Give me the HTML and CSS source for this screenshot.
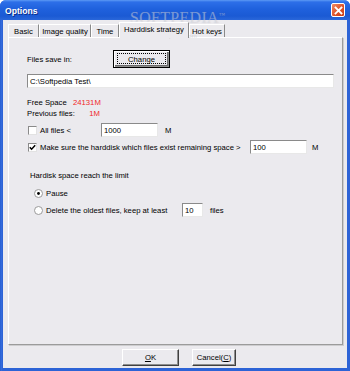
FILE: index.html
```html
<!DOCTYPE html>
<html>
<head>
<meta charset="utf-8">
<title>Options</title>
<link rel="stylesheet" href="styles.css">
</head>
<body>
<div class="window">
  <div class="titlebar">
    <span class="title">Options</span>
    <span class="close"><svg width="9" height="9" viewBox="0 0 9 9"><path d="M1.5 1.5 L7.5 7.5 M7.5 1.5 L1.5 7.5" stroke="#fff" stroke-width="1.8" stroke-linecap="square"/></svg></span>
  </div>
  <div class="client">
    <div class="tabs">
      <div class="tab t-basic">Basic</div>
      <div class="tab t-image">Image quality</div>
      <div class="tab t-time">Time</div>
      <div class="tab active t-hd">Harddisk strategy</div>
      <div class="tab t-hot">Hot keys</div>
    </div>
    <div class="panel">
      <div class="row row-save">
        <span class="lbl-save">Files save in:</span>
        <button class="btn btn-default">Change</button>
      </div>
      <div class="field f-path">C:\Softpedia Test\</div>
      <div class="row row-stat">
        <span class="lbl-stat">Free Space</span><span class="val">24131M</span>
      </div>
      <div class="row row-stat">
        <span class="lbl-stat">Previous files:</span><span class="val">1M</span>
      </div>
      <div class="row row-all">
        <span class="check"></span>
        <span class="lbl-all">All files &lt;</span>
        <div class="field f-num">1000</div>
        <span class="unit">M</span>
      </div>
      <div class="row row-sure">
        <span class="check"><svg width="7" height="7" viewBox="0 0 7 7"><path d="M0.8 3.2 L2.6 5.2 L6.2 1.2" fill="none" stroke="#000" stroke-width="1.5"/></svg></span>
        <span class="lbl-sure">Make sure the harddisk which files exist remaining space &gt;</span>
        <div class="field f-num">100</div>
        <span class="unit unit-sure">M</span>
      </div>
      <div class="row row-head">Hardisk space reach the limit</div>
      <div class="row row-pause">
        <span class="radio"><svg width="9" height="9" viewBox="0 0 9 9"><circle cx="4.5" cy="4.5" r="4" fill="#fff" stroke="#9a9a9a" stroke-width="1"/><circle cx="4.5" cy="4.5" r="1.4" fill="#000"/></svg></span>
        <span class="lbl-radio">Pause</span>
      </div>
      <div class="row row-delete">
        <span class="radio"><svg width="9" height="9" viewBox="0 0 9 9"><circle cx="4.5" cy="4.5" r="4" fill="#fff" stroke="#9a9a9a" stroke-width="1"/></svg></span>
        <span class="lbl-radio lbl-delete">Delete the oldest files, keep at least</span>
        <div class="field f-keep">10</div>
        <span class="unit">files</span>
      </div>
    </div>
    <div class="actions">
      <button class="btn btn-ok"><u>O</u>K</button>
      <button class="btn btn-cancel">Cancel(<u>C</u>)</button>
    </div>
  </div>
  <div class="watermark">SOFTPEDIA<sup>™</sup></div>
  <div class="watermark-url">www.softpedia.com</div>
</div>
</body>
</html>
```

FILE: styles.css
```css
* { box-sizing: border-box; }
html, body { margin: 0; padding: 0; }
body {
  width: 350px;
  height: 371px;
  overflow: hidden;
  background: #fff;
  font-family: "Liberation Sans", Arial, sans-serif;
  font-size: 7.7px;
  color: #000;
}

.window {
  position: relative;
  width: 350px;
  height: 371px;
  display: flex;
  flex-direction: column;
  background: linear-gradient(90deg, #1d52c9 0, #3a72e0 1px, #2d63d6 2px);
  border-radius: 6px 6px 0 0;
  overflow: hidden;
}

.titlebar {
  flex: none;
  height: 20px;
  display: flex;
  align-items: center;
  justify-content: space-between;
  padding: 0 5px 0 5px;
  background: linear-gradient(#5d9af5 0, #2d6fe8 2px, #1f61dd 45%, #1b5ad4 80%, #2a67da 100%);
}
.title {
  color: #fff;
  font-weight: bold;
  font-size: 8.6px;
  text-shadow: 1px 1px 0 #0b2f8a;
  margin-top: 1px;
}
.close {
  width: 14px;
  height: 14px;
  border: 1px solid #fff;
  border-radius: 2px;
  background: linear-gradient(135deg, #f08a64, #dc4f25 60%, #c83d16);
  display: flex;
  align-items: center;
  justify-content: center;
}

.client {
  flex: 1;
  margin: 0 3px 3px 3px;
  background: #ebeaee;
  display: flex;
  flex-direction: column;
  padding: 3px 4px 2px 5px;
}

.tabs {
  flex: none;
  height: 14px;
  display: flex;
  align-items: flex-end;
}
.tab {
  height: 13px;
  display: flex;
  align-items: center;
  justify-content: center;
  white-space: nowrap;
  border-top: 1px solid #fff;
  border-left: 1px solid #fff;
  border-right: 1px solid #8a8a8a;
  padding-top: 1px;
}
.t-basic { width: 31px; }
.t-image { width: 52px; }
.t-time { width: 28px; }
.t-hd { width: 70px; }
.t-hot { width: 36px; }
.tab.active {
  position: relative;
  z-index: 1;
  height: 16px;
  margin-bottom: -1px;
  background: #ebeaee;
  padding-bottom: 3px;
}

.panel {
  flex: none;
  height: 308px;
  border: 1px solid;
  border-color: #fff #9b9b9b #9b9b9b #fff;
  box-shadow: 1px 1px 0 #cdcdcf;
  padding: 0 0 0 18px;
}

.row {
  display: flex;
  align-items: center;
  white-space: nowrap;
}
.row-save { margin-top: 12px; height: 18px; }
.lbl-save { width: 86px; }

.btn {
  position: relative;
  font: inherit;
  color: #000;
  background: #ebeaee;
  padding: 0;
  display: flex;
  align-items: center;
  justify-content: center;
  border: 1px solid;
  border-color: #fff #404040 #404040 #fff;
  box-shadow: inset -1px -1px 0 #8f8f8f;
}
.btn-default {
  width: 57px;
  height: 18px;
  border-color: #000;
  box-shadow: inset 1px 1px 0 #fff, inset -1px -1px 0 #8f8f8f, inset -2px -2px 0 #6a6a6a;
}
.btn-default::after {
  content: "";
  position: absolute;
  left: 3px;
  top: 2px;
  right: 3px;
  bottom: 3px;
  border: 1px dotted #000;
}

.field {
  background: #fff;
  border: 1px solid;
  border-color: #8a8a8a #e8e8e8 #e8e8e8 #8a8a8a;
  height: 14px;
  padding-left: 2px;
  display: flex;
  align-items: center;
  white-space: nowrap;
}
.f-path { margin-top: 6px; width: 307px; }
.f-num { width: 57px; }
.f-keep { width: 21px; }

.row-stat { height: 10px; margin-top: 9px; }
.row-stat + .row-stat { margin-top: 1px; }
.lbl-stat { width: 46px; }
.val { width: 27px; text-align: right; color: #f02828; }

.check {
  width: 9px;
  height: 9px;
  margin-left: 1px;
  background: #fff;
  border: 1px solid;
  border-color: #8a8a8a #e2e2e2 #e2e2e2 #8a8a8a;
  display: flex;
  align-items: center;
  justify-content: center;
}
.row-all { height: 14px; margin-top: 5px; }
.row-sure { height: 14px; margin-top: 3px; }
.lbl-all { margin-left: 3px; width: 61px; }
.lbl-sure { margin-left: 3px; width: 210px; }
.unit { margin-left: 7px; }
.unit-sure { margin-left: 5px; }

.row-head { height: 10px; margin-top: 16px; padding-left: 3px; }
.radio {
  width: 9px;
  height: 9px;
  margin-left: 7px;
  display: flex;
}
.lbl-radio { margin-left: 3px; }
.lbl-delete { width: 136px; }
.row-pause { height: 10px; margin-top: 8px; }
.row-delete { height: 14px; margin-top: 5px; }

.actions {
  flex: none;
  display: flex;
  gap: 13px;
  margin-top: 4px;
  padding-left: 114px;
}
.btn-ok { width: 57px; height: 17px; }
.btn-cancel { width: 44px; height: 17px; }

.watermark {
  position: absolute;
  left: 130px;
  top: 9px;
  font-family: "Liberation Serif", serif;
  font-size: 16px;
  letter-spacing: 0.3px;
  color: rgba(255, 255, 255, 0.35);
  text-shadow: 0 0 1px rgba(120, 120, 140, 0.35);
  pointer-events: none;
}
.watermark sup { font-size: 6px; }
.watermark-url {
  position: absolute;
  left: 145px;
  top: 33px;
  font-size: 6px;
  color: rgba(150, 150, 160, 0.35);
  pointer-events: none;
}
```
